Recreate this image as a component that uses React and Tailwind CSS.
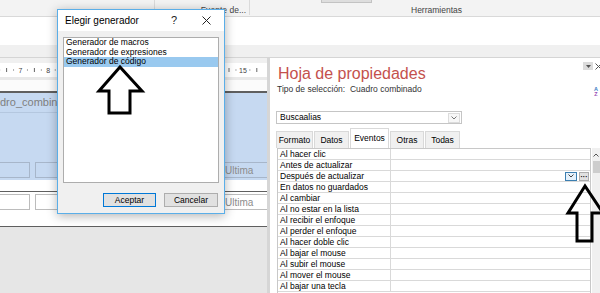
const events = [
  'Al hacer clic',
  'Antes de actualizar',
  'Después de actualizar',
  'En datos no guardados',
  'Al cambiar',
  'Al no estar en la lista',
  'Al recibir el enfoque',
  'Al perder el enfoque',
  'Al hacer doble clic',
  'Al bajar el mouse',
  'Al subir el mouse',
  'Al mover el mouse',
  'Al bajar una tecla',
];

const tabs = [
  { label: 'Formato', w: 'w-[37px]' },
  { label: 'Datos', w: 'w-[35px]' },
  { label: 'Eventos', w: 'w-[39px]', active: true },
  { label: 'Otras', w: 'w-[34px]' },
  { label: 'Todas', w: 'w-[35px]' },
];

function Ribbon() {
  return (
    <div className="flex h-[17px] border-b border-[#d9d9d9] bg-[#f3f3f3] text-[8.5px] text-[#444]">
      <div className="h-[15px] w-[155px] border-r border-[#dadada]" />
      <div className="h-[15px] w-[95px] border-r border-[#dadada] pr-[3px] pt-[5px] text-right leading-[10px]">
        Fuente de...
      </div>
      <div className="flex flex-1 flex-col">
        <div className="ml-[71px] h-[3px] w-[51px] border-x border-b border-[#c3c3c3] bg-[#dedede]" />
        <div className="mt-[2px] pl-[161px] leading-[11px]">Herramientas</div>
      </div>
    </div>
  );
}

function Ruler() {
  const unit = 27.8;
  const start = 20.5;
  const marks = [];
  for (let n = 6; n <= 15; n++) {
    const x = start + (n - 7) * unit;
    if (n >= 7) {
      marks.push(
        <text key={'t' + n} x={x} y="10" fontSize="7" fill="#444" textAnchor="middle">
          {n}
        </text>
      );
    }
    marks.push(<rect key={'a' + n} x={x + unit / 4 - 0.5} y="6.5" width="1" height="1" fill="#666" />);
    marks.push(<rect key={'b' + n} x={x + unit / 2 - 0.5} y="5" width="1" height="4" fill="#666" />);
    marks.push(<rect key={'c' + n} x={x + (unit * 3) / 4 - 0.5} y="6.5" width="1" height="1" fill="#666" />);
  }
  return (
    <div className="h-[14px] bg-white">
      <svg width="263" height="14" className="block">
        {marks}
      </svg>
    </div>
  );
}

function FieldRow({ border }) {
  return (
    <div className="flex h-[16px]">
      <div className={`-ml-px w-[31px] border ${border}`} />
      <div className={`ml-[5px] w-[70px] border ${border}`} />
      <div className={`ml-auto flex w-[46px] items-center border border-r-0 ${border} pl-[3px] text-[10px] text-[#8c8c8c]`}>
        Ultima
      </div>
    </div>
  );
}

function FormArea() {
  return (
    <div className="flex w-[267px] flex-col">
      <div className="h-[5px] bg-[#f0f0f0]" />
      <Ruler />
      <div className="h-[3px] bg-[#e9e9e9]" />
      <div className="h-[11px] bg-[#fbfbfb]" />
      <div className="h-[2px] bg-[#5f5f5f]" />
      <div className="flex h-[87px] flex-col bg-[#c6d9f1]">
        <div className="flex h-[20px] w-[120px] items-center border-b border-[#b4c7df] text-[11px] leading-none text-[#7f7f7f]">
          dro_combinado
        </div>
        <div className="flex-1" />
        <FieldRow border="border-[#a7b6ca]" />
        <div className="h-[2px]" />
      </div>
      <div className="h-[11px] bg-white" />
      <div className="h-px bg-[#5f5f5f]" />
      <div className="flex h-[20px] flex-col justify-center bg-white">
        <FieldRow border="border-[#bcbcbc]" />
      </div>
      <div className="h-[14px] bg-white" />
      <div className="h-px bg-[#5f5f5f]" />
      <div className="flex-1 bg-[#e6e6e6]" />
    </div>
  );
}

function PropertySheet() {
  return (
    <div className="flex w-[330px] flex-col bg-white pl-[7px] text-[8.5px] text-black">
      <div className="flex items-start justify-between">
        <div className="ml-[1px] mt-[6px] text-[16px] leading-[19px] text-[#c4514d]">Hoja de propiedades</div>
        <div className="mt-[4px] flex items-center gap-[2px]">
          <div className="flex h-[8px] w-[10px] items-center justify-center bg-[#dcdcdc]">
            <svg width="5" height="3" viewBox="0 0 5 3">
              <path d="M0 0h5L2.5 3z" fill="#555" />
            </svg>
          </div>
          <div className="w-[5px] overflow-hidden">
            <svg width="7" height="7" viewBox="0 0 7 7" className="block">
              <path d="M0.5 0.5l6 6M6.5 0.5l-6 6" stroke="#555" strokeWidth="1" />
            </svg>
          </div>
        </div>
      </div>

      <div className="mt-[1px] flex h-[11px] items-start justify-between">
        <span className="whitespace-pre leading-[11px] text-[#333]">Tipo de selección:  Cuadro combinado</span>
        <div className="mr-[2px] mt-[3px] flex flex-col items-center text-[5.5px] font-bold leading-[5px]">
          <span className="text-[#3b7dc4]">A</span>
          <span className="text-[#9a4fb5]">Z</span>
        </div>
      </div>

      <div className="-ml-px mt-[16px] flex h-[13px] w-[186px] items-center justify-between border border-[#c5c5c5] pl-[3px]">
        <span className="leading-none">Buscaalias</span>
        <div className="mr-px flex h-[10px] w-[12px] items-center justify-center border border-[#dcdcdc] bg-[#f7f7f7]">
          <svg width="6" height="4" viewBox="0 0 6 4">
            <path d="M0.5 0.5l2.5 2.5 2.5-2.5" fill="none" stroke="#777" strokeWidth="1" />
          </svg>
        </div>
      </div>

      <div className="-ml-px mt-[4px] flex h-[20px] items-end gap-[1px]">
        {tabs.map((t) => (
          <div
            key={t.label}
            className={`flex ${t.w} items-center justify-center border border-b-0 border-[#d9d9d9] leading-none ${
              t.active ? 'h-[20px] bg-white' : 'h-[17px] bg-[#f0f0f0]'
            }`}
          >
            {t.label}
          </div>
        ))}
      </div>

      <div className="flex min-h-0 flex-1 overflow-hidden">
        <div className="w-[314px] border-x border-t border-[#c8c8c8]">
          {events.map((label, i) => (
            <div key={label} className="flex h-[11px] border-b border-[#d9d9d9]">
              <div className="w-[113px] border-r border-[#d9d9d9] pl-[2px] leading-[10px]">{label}</div>
              <div className="flex flex-1 items-center justify-end gap-[2px] pr-px">
                {i === 2 && (
                  <>
                    <div className="flex h-[9px] w-[12px] items-center justify-center border border-[#3c7fb1] bg-[#e5f1fb]">
                      <svg width="6" height="4" viewBox="0 0 6 4">
                        <path d="M0.5 0.5l2.5 2.5 2.5-2.5" fill="none" stroke="#444" strokeWidth="1" />
                      </svg>
                    </div>
                    <div className="flex h-[9px] w-[10px] items-center justify-center border border-[#adadad] bg-[#e1e1e1] text-[7px] font-bold leading-none">
                      ···
                    </div>
                  </>
                )}
              </div>
            </div>
          ))}
        </div>
        <div className="ml-px flex w-[8px] flex-col items-center bg-[#f0f0f0]">
          <div className="flex h-[13px] items-center">
            <svg width="6" height="4" viewBox="0 0 6 4">
              <path d="M0.5 3.5l2.5-2.5 2.5 2.5" fill="none" stroke="#555" strokeWidth="1" />
            </svg>
          </div>
          <div className="h-[12px] w-[7px] bg-[#cdcdcd]" />
        </div>
      </div>
    </div>
  );
}

function Dialog() {
  return (
    <div className="absolute left-[57px] top-[9px] flex h-[205px] w-[168px] flex-col border border-[#5aaee8] bg-[#f0f0f0] shadow-[0_2px_10px_rgba(0,0,0,0.3)]">
      <div className="flex h-[21px] items-center bg-white pl-[7px] text-[10px] leading-none">
        <span>Elegir generador</span>
        <span className="ml-auto text-[11px] text-[#222]">?</span>
        <svg width="9" height="9" viewBox="0 0 9 9" className="ml-[25px] mr-[13px]">
          <path d="M0.5 0.5l8 8M8.5 0.5l-8 8" stroke="#222" strokeWidth="1" />
        </svg>
      </div>
      <div className="mx-[5px] mt-[6px] h-[146px] border border-[#adadad] bg-white text-[8.5px] leading-[9.5px]">
        <div className="pl-[2px]">Generador de macros</div>
        <div className="pl-[2px]">Generador de expresiones</div>
        <div className="bg-[#99c9ef] pl-[2px]">Generador de código</div>
      </div>
      <div className="mt-[10px] flex justify-end gap-[8px] pr-[6px] text-[8.5px]">
        <div className="flex h-[14px] w-[53px] items-center justify-center border border-[#0078d7] bg-[#e1e1e1] leading-none">
          Aceptar
        </div>
        <div className="flex h-[14px] w-[54px] items-center justify-center border border-[#adadad] bg-[#e1e1e1] leading-none">
          Cancelar
        </div>
      </div>
    </div>
  );
}

function Arrows() {
  return (
    <svg width="600" height="293" className="pointer-events-none absolute left-0 top-0">
      <polygon
        points="120,67 99,91 109,91 109,113 130,113 130,91 142,91"
        fill="white"
        stroke="black"
        strokeWidth="3"
      />
      <polygon
        points="585,186 568,213 577,213 577,241 592,241 592,213 603,213"
        fill="none"
        stroke="black"
        strokeWidth="3"
      />
    </svg>
  );
}

export default function App() {
  return (
    <div className="relative h-[293px] w-[600px] overflow-hidden bg-white font-['Liberation_Sans',Arial,sans-serif] text-black">
      <Ribbon />
      <div className="h-[28px] bg-white" />
      <div className="h-[13px] border-b border-[#d5d5d5] bg-[#f0f0f0]" />
      <div className="flex h-[235px]">
        <FormArea />
        <div className="w-[3px] bg-[#d6d6d6]" />
        <PropertySheet />
      </div>
      <Dialog />
      <Arrows />
    </div>
  );
}
